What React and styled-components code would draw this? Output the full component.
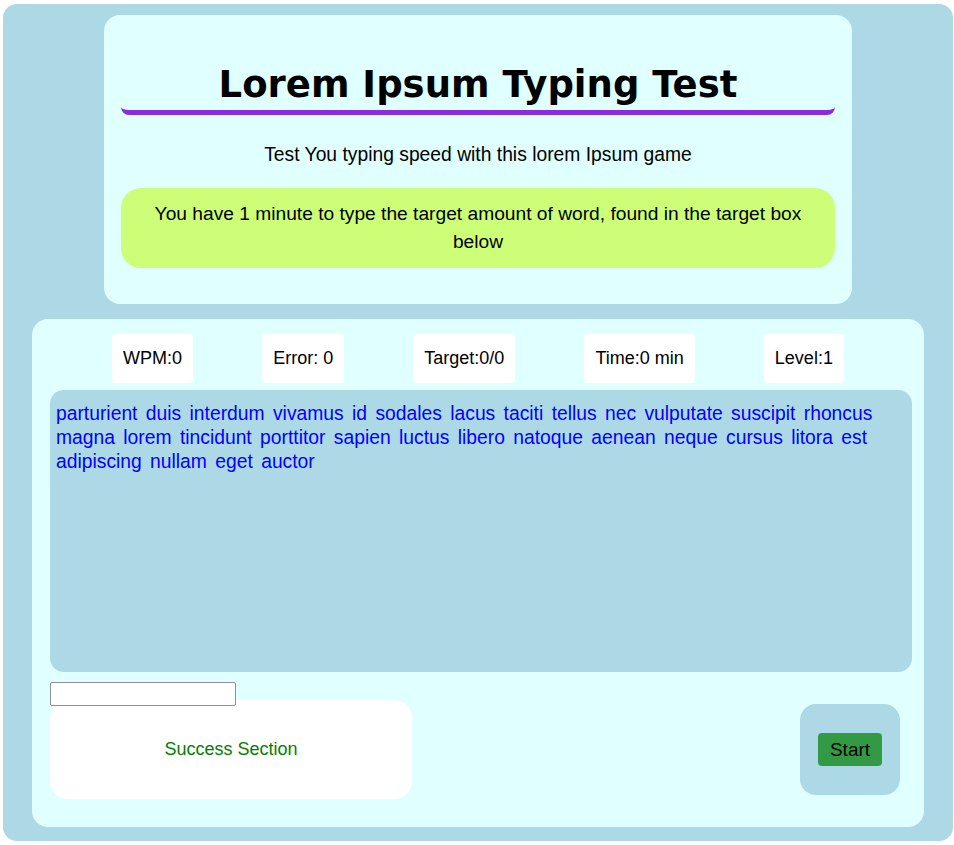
import React from 'react';
import styled, { createGlobalStyle } from 'styled-components';

const GlobalStyle = createGlobalStyle`
  body {
    margin: 0;
    padding: 4px 1px 4px 3px;
    background: #ffffff;
    font-family: "Liberation Sans", Arial, sans-serif;
  }
`;

const Frame = styled.div`
  background: #add8e6;
  border-radius: 14px;
  padding: 11px 29px 14px;
  display: flex;
  flex-direction: column;
  align-items: center;
  gap: 15px;
`;

const HeaderCard = styled.header`
  width: 748px;
  box-sizing: border-box;
  background: #e0ffff;
  border-radius: 16px;
  padding: 29px 17px 36px;
  text-align: center;
`;

const Title = styled.h1`
  margin: 22px 0 0;
  padding-bottom: 7px;
  font-family: "DejaVu Sans", Verdana, sans-serif;
  font-size: 37px;
  font-weight: bold;
  line-height: 37px;
  color: #000;
  border-bottom: 5px solid #8a2be2;
  border-radius: 0 0 8px 8px;
`;

const Subtitle = styled.p`
  margin: 29px 0 23px;
  font-size: 19.3px;
  line-height: 21px;
`;

const Notice = styled.div`
  background: #ccff77;
  border-radius: 20px;
  padding: 12px 24px;
  font-size: 19.2px;
  line-height: 28px;
`;

const GameCard = styled.main`
  align-self: stretch;
  background: #e0ffff;
  border-radius: 16px;
  padding: 15px 12px 28px 18px;
  display: flex;
  flex-direction: column;
`;

const StatsRow = styled.div`
  display: flex;
  justify-content: space-evenly;
  margin: 0 -1px 7px -7px;
`;

const Stat = styled.div`
  background: #fff;
  border-radius: 4px;
  padding: 15px 11px;
  font-size: 18px;
  line-height: 19px;
`;

const WordBox = styled.div`
  height: 282px;
  box-sizing: border-box;
  background: #add8e6;
  border-radius: 14px;
  padding: 12px 6px;
  font-size: 19.3px;
  line-height: 24px;
  color: #0000ff;
`;

const Word = styled.span`
  margin-right: 3px;
`;

const TypeInput = styled.input`
  margin-top: 10px;
  width: 186px;
  height: 24px;
  box-sizing: border-box;
  border: 1px solid #8f8f9d;
  border-radius: 2px;
  background: #fff;
  align-self: flex-start;
  position: relative;
  z-index: 1;
`;

const BottomRow = styled.div`
  display: flex;
  justify-content: space-between;
  align-items: flex-start;
  margin-top: -6px;
  padding-right: 12px;
`;

const Success = styled.div`
  width: 362px;
  height: 99px;
  background: #fff;
  border-radius: 18px;
  display: flex;
  align-items: center;
  justify-content: center;
  color: #008000;
  font-size: 18px;
`;

const StartPanel = styled.div`
  margin-top: 4px;
  width: 100px;
  height: 91px;
  background: #add8e6;
  border-radius: 16px;
  display: flex;
  align-items: center;
  justify-content: center;
`;

const StartButton = styled.button`
  background: #339944;
  border: none;
  border-radius: 4px;
  width: 64px;
  height: 33px;
  padding: 0;
  font-family: "Liberation Sans", Arial, sans-serif;
  font-size: 19px;
  color: #000;
  cursor: pointer;
`;

const words = 'parturient duis interdum vivamus id sodales lacus taciti tellus nec vulputate suscipit rhoncus magna lorem tincidunt porttitor sapien luctus libero natoque aenean neque cursus litora est adipiscing nullam eget auctor'.split(' ');

const stats = ['WPM:0', 'Error: 0', 'Target:0/0', 'Time:0 min', 'Level:1'];

export default function App() {
  return (
    <>
      <GlobalStyle />
      <Frame>
        <HeaderCard>
          <Title>Lorem Ipsum Typing Test</Title>
          <Subtitle>Test You typing speed with this lorem Ipsum game</Subtitle>
          <Notice>You have 1 minute to type the target amount of word, found in the target box below</Notice>
        </HeaderCard>
        <GameCard>
          <StatsRow>
            {stats.map((s) => (
              <Stat key={s}>{s}</Stat>
            ))}
          </StatsRow>
          <WordBox>
            {words.map((w, i) => (
              <React.Fragment key={i}>
                <Word>{w}</Word>{' '}
              </React.Fragment>
            ))}
          </WordBox>
          <TypeInput type="text" />
          <BottomRow>
            <Success>Success Section</Success>
            <StartPanel>
              <StartButton>Start</StartButton>
            </StartPanel>
          </BottomRow>
        </GameCard>
      </Frame>
    </>
  );
}
